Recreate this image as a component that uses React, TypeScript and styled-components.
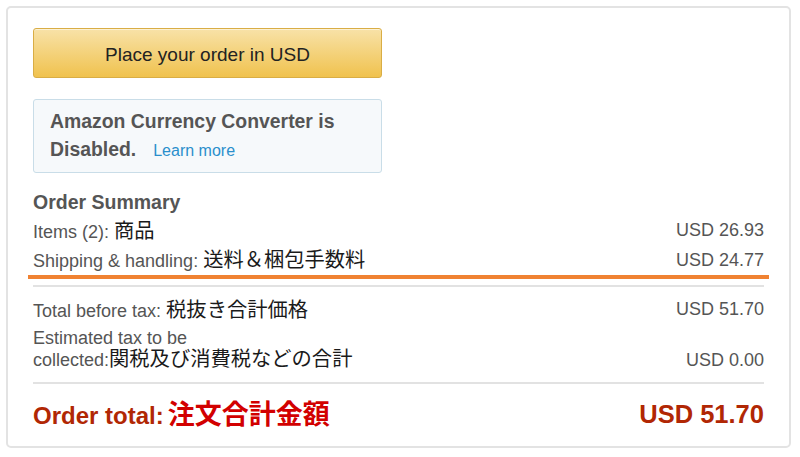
import styled, { createGlobalStyle } from "styled-components";

const GlobalStyle = createGlobalStyle`
    html, body {
        margin: 0;
        padding: 0;
        background: #ffffff;
    }
    body {
        font-family: "Liberation Sans", Arial, sans-serif;
    }
`;

const Page = styled.div`
    width: 800px;
    height: 457px;
    padding: 6px;
    box-sizing: border-box;
`;

const Box = styled.div`
    width: 785px;
    height: 442px;
    box-sizing: border-box;
    border: 2px solid #e3e3e3;
    border-radius: 5px;
    padding: 20px 25px 0 25px;
    display: flex;
    flex-direction: column;
`;

const OrderButton = styled.button`
    width: 349px;
    height: 50px;
    border: 1px solid #d9ad45;
    border-radius: 3px;
    background: linear-gradient(to bottom, #f8e2a8, #f0c24e);
    font-family: "Liberation Sans", Arial, sans-serif;
    font-size: 19px;
    color: #222;
    box-shadow: inset 0 1px 0 rgba(255, 255, 255, 0.5);
    padding: 3px 0 0 0;
`;

const Notice = styled.div`
    width: 349px;
    height: 74px;
    box-sizing: border-box;
    margin-top: 21px;
    border: 1px solid #c9dde8;
    border-radius: 3px;
    background: #f6f9fb;
    padding: 7px 10px 0 16px;
    font-size: 19.4px;
    font-weight: bold;
    color: #555;
    line-height: 28px;
    white-space: nowrap;
`;

const LearnMore = styled.a`
    font-size: 16px;
    font-weight: normal;
    color: #2a8fcc;
    margin-left: 17px;
    text-decoration: none;
`;

const Heading = styled.div`
    margin-top: 17px;
    height: 24px;
    font-size: 19.5px;
    font-weight: bold;
    color: #555;
    line-height: 24px;
`;

const Row = styled.div<{ h: number; top?: number; bottom?: boolean }>`
    display: flex;
    justify-content: space-between;
    align-items: ${(p) => (p.bottom ? "flex-end" : "center")};
    height: ${(p) => p.h}px;
    margin-top: ${(p) => p.top ?? 0}px;
    color: #555;
    font-size: 18px;
    line-height: 19px;
    white-space: nowrap;
`;

const Stack = styled.div`
    display: flex;
    flex-direction: column;
`;

const Jp = styled.span`
    font-family: "Noto Sans CJK JP", sans-serif;
    font-size: 20.3px;
    line-height: 19px;
    color: #1a1a1a;
`;

const Amount = styled.span`
    font-size: 18px;
    line-height: 19px;
    color: #555;
`;

const Highlight = styled.div`
    height: 4px;
    background: #f08232;
    margin: 0 -5px;
`;

const Rule = styled.div<{ gap: number }>`
    height: 2px;
    background: #e2e2e2;
    margin-top: ${(p) => p.gap}px;
`;

const TotalRow = styled.div`
    display: flex;
    justify-content: space-between;
    align-items: center;
    height: 34px;
    margin-top: 13px;
    color: #b12704;
    font-size: 24px;
    line-height: 30px;
    font-weight: bold;
`;

const TotalJp = styled.span`
    font-family: "Noto Sans CJK JP", sans-serif;
    font-size: 27px;
    font-weight: bold;
    color: #d20000;
    margin-left: 4px;
`;

const TotalAmount = styled.span`
    font-size: 25.5px;
`;

const App = () => {
    return (
        <>
            <GlobalStyle />
            <Page>
                <Box>
                    <OrderButton>Place your order in USD</OrderButton>
                    <Notice>
                        Amazon Currency Converter is
                        <br />
                        Disabled.
                        <LearnMore href="#">Learn more</LearnMore>
                    </Notice>
                    <Heading>Order Summary</Heading>
                    <Row h={29} top={2}>
                        <span>
                            Items (2): <Jp>商品</Jp>
                        </span>
                        <Amount>USD 26.93</Amount>
                    </Row>
                    <Row h={30}>
                        <span>
                            Shipping &amp; handling: <Jp>送料＆梱包手数料</Jp>
                        </span>
                        <Amount>USD 24.77</Amount>
                    </Row>
                    <Highlight />
                    <Rule gap={6} />
                    <Row h={29} top={8}>
                        <span>
                            Total before tax: <Jp>税抜き合計価格</Jp>
                        </span>
                        <Amount>USD 51.70</Amount>
                    </Row>
                    <Row h={40} top={6} bottom>
                        <Stack>
                            <span>Estimated tax to be</span>
                            <span>
                                collected:<Jp>関税及び消費税などの合計</Jp>
                            </span>
                        </Stack>
                        <Amount>USD 0.00</Amount>
                    </Row>
                    <Rule gap={12} />
                    <TotalRow>
                        <span>
                            Order total:<TotalJp>注文合計金額</TotalJp>
                        </span>
                        <TotalAmount>USD 51.70</TotalAmount>
                    </TotalRow>
                </Box>
            </Page>
        </>
    );
};

export default App;
